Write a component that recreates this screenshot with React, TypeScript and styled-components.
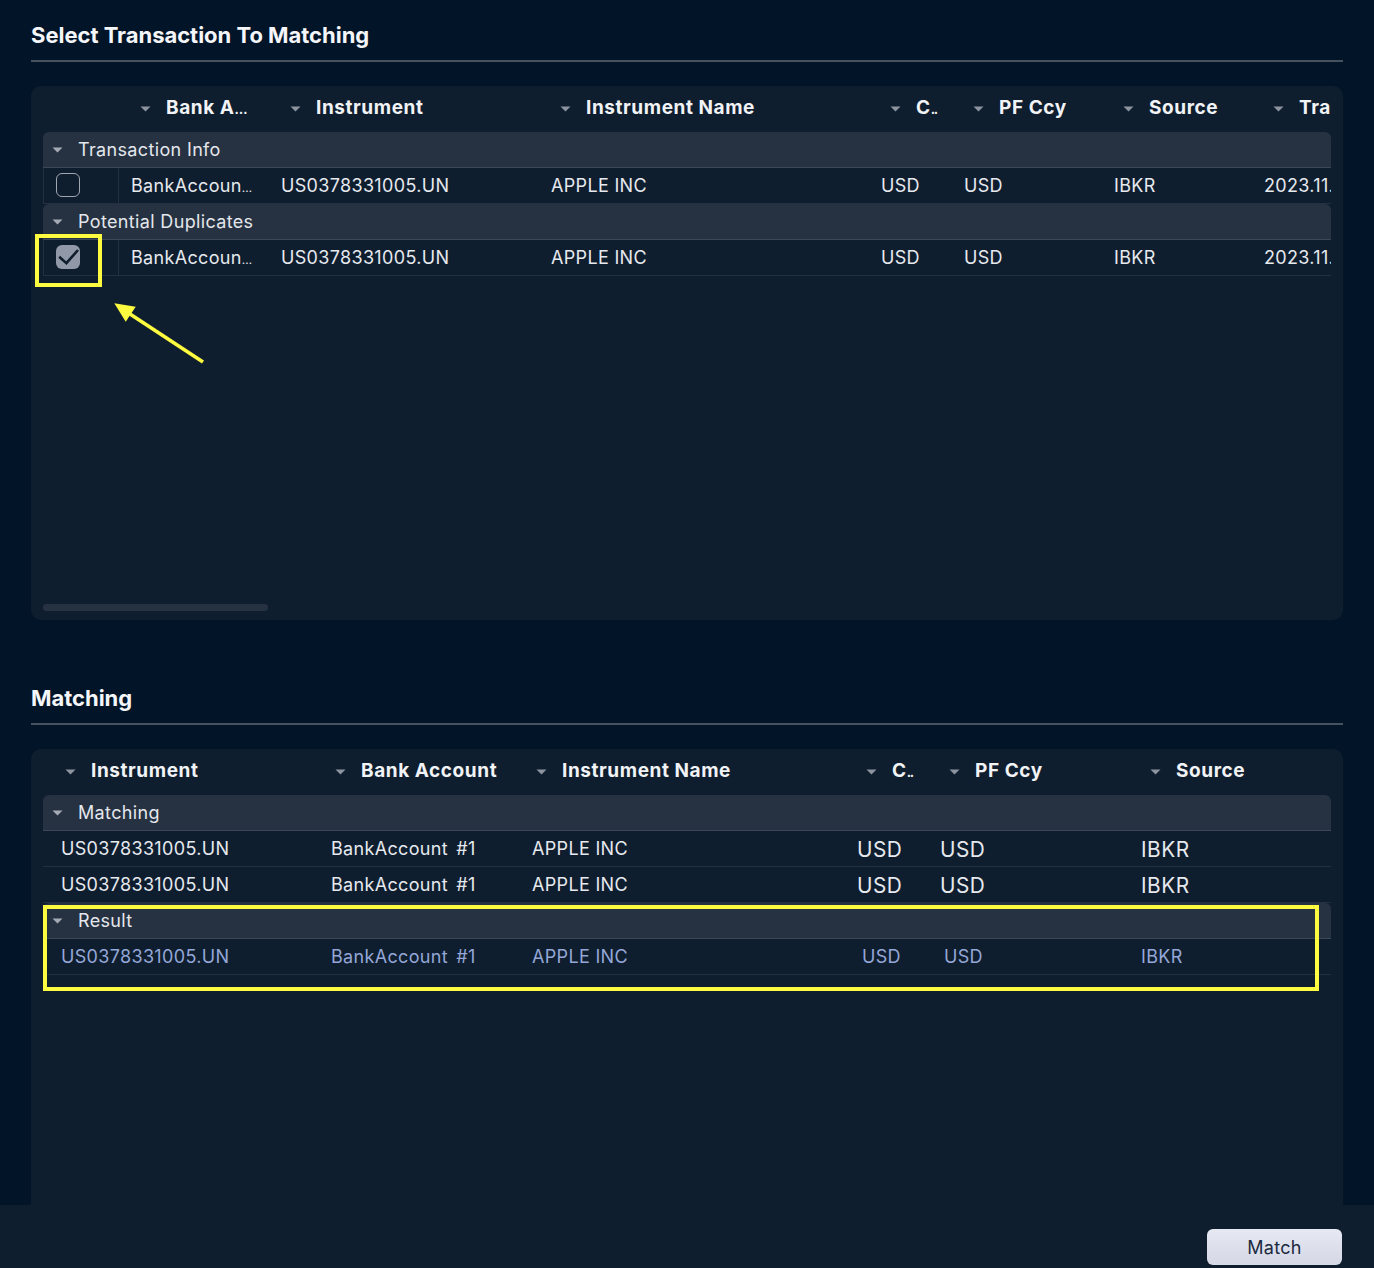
import React from "react";
import styled, { createGlobalStyle } from "styled-components";

const Global = createGlobalStyle`
  html, body { margin: 0; padding: 0; background: #021428; }
  body { font-family: Inter, "Noto Sans", sans-serif; }
  * { box-sizing: border-box; }
`;

const Page = styled.div`
  position: relative;
  width: 1374px;
  height: 1268px;
  display: flex;
  flex-direction: column;
  overflow: hidden;
  background: #021428;
`;
const Section = styled.section<{ $grow?: boolean; $top: number }>`
  display: flex;
  flex-direction: column;
  padding: 0 31px;
  margin-top: ${(p) => p.$top}px;
  ${(p) => (p.$grow ? "flex: 1; min-height: 0;" : "")}
`;
const Title = styled.h2`
  margin: 0;
  height: 46px;
  padding-top: 6px;
  line-height: 26px;
  font-size: 22px;
  font-weight: 650;
  letter-spacing: -0.02px;
  color: #f4f6f9;
  border-bottom: 2px solid #46525f;
`;
const Card = styled.div<{ $h?: number }>`
  margin-top: 24px;
  background: #0f1e2e;
  border-radius: 10px 10px 0 0;
  padding: 0 12px;
  overflow: hidden;
  display: flex;
  flex-direction: column;
  ${(p) => (p.$h ? `height: ${p.$h}px; border-radius: 10px;` : "flex: 1;")}
`;
const Grid = styled.div`
  width: 1288px;
  overflow: hidden;
  flex: 1;
`;
const HeadRow = styled.div`
  display: flex;
  height: 46px;
  align-items: center;
`;
const HeadCell = styled.div<{ $w: number }>`
  position: relative;
  flex: 0 0 ${(p) => p.$w}px;
  width: ${(p) => p.$w}px;
  padding: 0 0 4px 48px;
  white-space: nowrap;
  font-size: 19px;
  font-weight: 650;
  letter-spacing: 0.57px;
  color: #f1f3f6;
  display: flex;
  align-items: center;
  height: 100%;
`;
const HeadCaret = styled.svg`
  position: absolute;
  left: 22px;
  top: 20px;
  width: 11px;
  height: 6px;
  color: #8d949f;
`;
const HeadDots = styled.span`
  font-size: 13px;
  letter-spacing: -1.2px;
`;
const RowDots = styled.span`
  font-size: 12px;
  letter-spacing: -0.4px;
`;
const AccountText = styled.span`
  word-spacing: 3px;
`;
const GroupRow = styled.div`
  height: 36px;
  background: #263242;
  border-bottom: 1px solid #3c4857;
  border-radius: 6px 6px 0 0;
  display: flex;
  align-items: center;
  padding-left: 9px;
  font-size: 18px;
  letter-spacing: 0.35px;
  color: #e4e7ec;
  gap: 15px;
`;
const GroupCaret = styled.svg`
  flex: 0 0 11px;
  width: 11px;
  height: 6px;
  color: #a5abb4;
`;
const Row = styled.div`
  display: flex;
  height: 36px;
  border-bottom: 1px solid #233040;
  align-items: stretch;
  white-space: nowrap;
  background: #0f1e2e;
`;
const SelectCell = styled.div`
  flex: 0 0 76px;
  border-left: 1px solid #233040;
  border-right: 1px solid #233040;
  padding: 0 0 1px 12px;
  display: flex;
  align-items: center;
`;
const Cell = styled.div<{ $w: number; $pad?: number; $big?: boolean; $result?: boolean }>`
  flex: 0 0 ${(p) => p.$w}px;
  width: ${(p) => p.$w}px;
  padding-left: ${(p) => p.$pad ?? 13}px;
  padding-top: ${(p) => (p.$big ? 2 : 1)}px;
  font-size: ${(p) => (p.$big ? 20.8 : 18)}px;
  letter-spacing: ${(p) => (p.$big ? 0.5 : 0.33)}px;
  color: ${(p) => (p.$result ? "#94a7d8" : "#e6e9ee")};
  line-height: 34px;
  overflow: hidden;
`;
const Check = styled.div<{ $on?: boolean }>`
  width: 24px;
  height: 24px;
  border-radius: 6px;
  border: ${(p) => (p.$on ? "none" : "1px solid #a0a6b0")};
  background: ${(p) => (p.$on ? "#9199a8" : "transparent")};
  display: flex;
`;
const Scrollbar = styled.div`
  width: 225px;
  height: 7px;
  margin-bottom: 9px;
  border-radius: 4px;
  background: #263242;
  flex: none;
`;
const Footer = styled.footer`
  flex: none;
  height: 63px;
  background: #0f1e2e;
  display: flex;
  justify-content: flex-end;
  align-items: flex-start;
  padding: 24px 32px 0 0;
`;
const MatchButton = styled.button`
  width: 135px;
  height: 36px;
  border: none;
  border-radius: 6px;
  background: linear-gradient(180deg, #e6e8f2 0%, #d5d8e5 100%);
  color: #1b2a40;
  font-family: inherit;
  font-size: 18px;
  letter-spacing: 0.25px;
  padding: 0;
`;
const Highlight = styled.div<{ $x: number; $y: number; $w: number; $h: number }>`
  position: absolute;
  left: ${(p) => p.$x}px;
  top: ${(p) => p.$y}px;
  width: ${(p) => p.$w}px;
  height: ${(p) => p.$h}px;
  border: 4px solid #fdfb3f;
  pointer-events: none;
`;
const Arrow = styled.svg`
  position: absolute;
  left: 110px;
  top: 298px;
  width: 100px;
  height: 70px;
`;

const Caret = () => <path d="M0.5 0.5 H10.5 L5.5 5.5 Z" fill="currentColor" />;

const Head = ({ w, children }: { w: number; children?: React.ReactNode }) => (
  <HeadCell $w={w}>
    <HeadCaret viewBox="0 0 11 6">
      <Caret />
    </HeadCaret>
    <span>{children}</span>
  </HeadCell>
);

const Group = ({ children }: { children: React.ReactNode }) => (
  <GroupRow>
    <GroupCaret viewBox="0 0 11 6">
      <Caret />
    </GroupCaret>
    {children}
  </GroupRow>
);

const TopRow = ({ checked }: { checked?: boolean }) => (
  <Row>
    <SelectCell>
      <Check $on={checked}>
        {checked && (
          <svg width="24" height="24" viewBox="0 0 24 24" fill="none">
            <path d="M3.2 11.8 L10.4 18.2 L22 5" stroke="#101d2d" strokeWidth="2.6" />
          </svg>
        )}
      </Check>
    </SelectCell>
    <Cell $w={149} $pad={12}>
      BankAccoun<RowDots>…</RowDots>
    </Cell>
    <Cell $w={270}>US0378331005.UN</Cell>
    <Cell $w={330}>APPLE INC</Cell>
    <Cell $w={83}>USD</Cell>
    <Cell $w={150}>USD</Cell>
    <Cell $w={150}>IBKR</Cell>
    <Cell $w={80}>2023.11.21</Cell>
  </Row>
);

const MatchRow = () => (
  <Row>
    <Cell $w={270} $pad={18}>US0378331005.UN</Cell>
    <Cell $w={201} $pad={18}>
      <AccountText>BankAccount #1</AccountText>
    </Cell>
    <Cell $w={330} $pad={18}>APPLE INC</Cell>
    <Cell $w={83} $pad={13} $big>USD</Cell>
    <Cell $w={201} $pad={13} $big>USD</Cell>
    <Cell $w={203} $pad={13} $big>IBKR</Cell>
  </Row>
);

const ResultRow = () => (
  <Row>
    <Cell $w={270} $pad={18} $result>US0378331005.UN</Cell>
    <Cell $w={201} $pad={18} $result>
      <AccountText>BankAccount #1</AccountText>
    </Cell>
    <Cell $w={330} $pad={18} $result>APPLE INC</Cell>
    <Cell $w={83} $pad={18} $result>USD</Cell>
    <Cell $w={201} $pad={17} $result>USD</Cell>
    <Cell $w={203} $pad={13} $result>IBKR</Cell>
  </Row>
);

export default function App() {
  return (
    <Page>
      <Global />
      <Section $top={16}>
        <Title>Select Transaction To Matching</Title>
        <Card $h={534}>
          <Grid>
            <HeadRow>
              <HeadCell $w={75} />
              <Head w={150}>
                Bank A<HeadDots>…</HeadDots>
              </Head>
              <Head w={270}>Instrument</Head>
              <Head w={330}>Instrument Name</Head>
              <Head w={83}>
                C<HeadDots>..</HeadDots>
              </Head>
              <Head w={150}>PF Ccy</Head>
              <Head w={150}>Source</Head>
              <Head w={80}>Tra</Head>
            </HeadRow>
            <Group>Transaction Info</Group>
            <TopRow />
            <Group>Potential Duplicates</Group>
            <TopRow checked />
          </Grid>
          <Scrollbar />
        </Card>
      </Section>
      <Section $top={59} $grow>
        <Title>Matching</Title>
        <Card>
          <Grid>
            <HeadRow>
              <Head w={270}>Instrument</Head>
              <Head w={201}>Bank Account</Head>
              <Head w={330}>Instrument Name</Head>
              <Head w={83}>
                C<HeadDots>..</HeadDots>
              </Head>
              <Head w={201}>PF Ccy</Head>
              <Head w={203}>Source</Head>
            </HeadRow>
            <Group>Matching</Group>
            <MatchRow />
            <MatchRow />
            <Group>Result</Group>
            <ResultRow />
          </Grid>
        </Card>
      </Section>
      <Footer>
        <MatchButton>Match</MatchButton>
      </Footer>
      <Highlight $x={35} $y={234} $w={67} $h={53} />
      <Highlight $x={43} $y={905} $w={1276} $h={86} />
      <Arrow viewBox="110 298 100 70">
        <path d="M130 314 L203 362" stroke="#fdfb3f" strokeWidth="3.6" fill="none" />
        <path d="M114.3 303.3 L135.7 306.7 L125.7 321.7 Z" fill="#fdfb3f" />
      </Arrow>
    </Page>
  );
}
